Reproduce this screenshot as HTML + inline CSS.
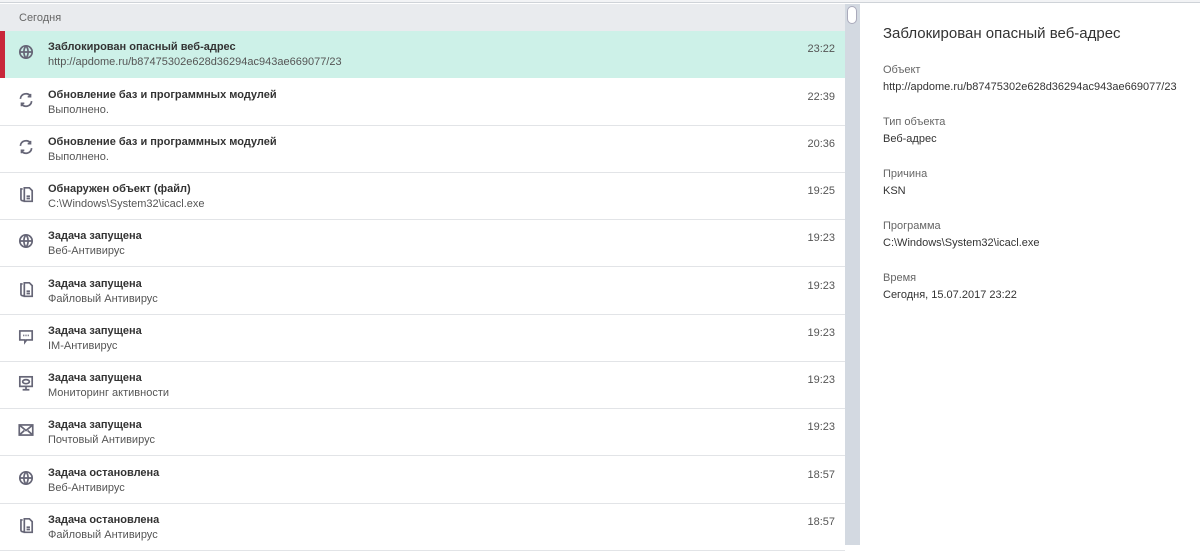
<!DOCTYPE html>
<html><head><meta charset="utf-8"><style>
*{margin:0;padding:0;box-sizing:border-box}
body{width:1200px;height:545px;overflow:hidden;background:#fff;font-family:"Liberation Sans",sans-serif;position:relative}
.top{position:absolute;left:0;top:0;width:1200px;height:3px;background:#f2f3f5;border-bottom:1px solid #cfd3d8}
.hdr{position:absolute;left:0;top:4px;width:845px;height:27px;background:#e9ebee;font-size:11px;color:#666;padding:8px 0 0 19px}
.row{position:absolute;left:0;width:845px;height:47px;border-bottom:1.5px solid #e2e4e7}
.row.sel{background:#cdf1e8;border-bottom:none}
.row.sel:before{content:"";position:absolute;left:0;top:0;width:5px;height:47px;background:#c8283a}
.t{position:absolute;left:48px;top:10px;font-size:11px;font-weight:bold;color:#333}
.s{position:absolute;left:48px;top:25px;font-size:11px;color:#555}
.tm{position:absolute;right:10px;top:12px;font-size:11px;color:#555}
.ic{position:absolute;left:17px;top:12px;width:18px;height:18px}
.sb{position:absolute;left:845px;top:4px;width:15px;height:541px;background:#d3d9e1}
.th{position:absolute;left:847px;top:6px;width:10px;height:18px;background:#fff;border:1px solid #aab;border-radius:5px}
.rt{position:absolute;left:883px;top:25px;font-size:15px;color:#333}
.l{position:absolute;left:883px;font-size:11px;color:#666}
.v{position:absolute;left:883px;font-size:11px;color:#333}
</style></head><body>
<div class="top"></div>
<div class="hdr">Сегодня</div>

<div class="row sel" style="top:31px"><svg class="ic" viewBox="0 0 16 16" fill="none" stroke="#667" stroke-width="1.5"><circle cx="8" cy="8" r="5.5"/><path d="M2.5 8h11M8 2.5c-2.5 3-2.5 8 0 11M8 2.5c2.5 3 2.5 8 0 11"/></svg><div class="t">Заблокирован опасный веб-адрес</div><div class="s">http://apdome.ru/b87475302e628d36294ac943ae669077/23</div><div class="tm">23:22</div></div>

<div class="row" style="top:79px"><svg class="ic" viewBox="0 0 16 16" fill="none" stroke="#667" stroke-width="1.5"><path d="M3 7a5 5 0 0 1 9-2.5M12 2.5v2.5h-2.5M13 9a5 5 0 0 1-9 2.5M4 13.5v-2.5h2.5"/></svg><div class="t">Обновление баз и программных модулей</div><div class="s">Выполнено.</div><div class="tm">22:39</div></div>

<div class="row" style="top:126px"><svg class="ic" viewBox="0 0 16 16" fill="none" stroke="#667" stroke-width="1.5"><path d="M3 7a5 5 0 0 1 9-2.5M12 2.5v2.5h-2.5M13 9a5 5 0 0 1-9 2.5M4 13.5v-2.5h2.5"/></svg><div class="t">Обновление баз и программных модулей</div><div class="s">Выполнено.</div><div class="tm">20:36</div></div>

<div class="row" style="top:173px"><svg class="ic" viewBox="0 0 16 16" fill="none" stroke="#667" stroke-width="1.5"><path d="M5 3.5H3.5v9a1.5 1.5 0 0 0 1.5 1.5h1"/><path d="M6.5 2.5h4.5l2.5 2.5v9.5h-7z"/><path d="M8.5 10h3M8.5 12h3"/></svg><div class="t">Обнаружен объект (файл)</div><div class="s">C:\Windows\System32\icacl.exe</div><div class="tm">19:25</div></div>

<div class="row" style="top:220px"><svg class="ic" viewBox="0 0 16 16" fill="none" stroke="#667" stroke-width="1.5"><circle cx="8" cy="8" r="5.5"/><path d="M2.5 8h11M8 2.5c-2.5 3-2.5 8 0 11M8 2.5c2.5 3 2.5 8 0 11"/></svg><div class="t">Задача запущена</div><div class="s">Веб-Антивирус</div><div class="tm">19:23</div></div>

<div class="row" style="top:268px"><svg class="ic" viewBox="0 0 16 16" fill="none" stroke="#667" stroke-width="1.5"><path d="M5 3.5H3.5v9a1.5 1.5 0 0 0 1.5 1.5h1"/><path d="M6.5 2.5h4.5l2.5 2.5v9.5h-7z"/><path d="M8.5 10h3M8.5 12h3"/></svg><div class="t">Задача запущена</div><div class="s">Файловый Антивирус</div><div class="tm">19:23</div></div>

<div class="row" style="top:315px"><svg class="ic" viewBox="0 0 16 16" fill="none" stroke="#667" stroke-width="1.5"><path d="M2.5 3.5h11v8h-5l-1.5 2v-2h-4.5z"/><path d="M5.5 7.5h1M7.5 7.5h1M9.5 7.5h1"/></svg><div class="t">Задача запущена</div><div class="s">IM-Антивирус</div><div class="tm">19:23</div></div>

<div class="row" style="top:362px"><svg class="ic" viewBox="0 0 16 16" fill="none" stroke="#667" stroke-width="1.5"><rect x="2.5" y="2.5" width="11" height="8.5"/><path d="M8 11v3M5 14h6"/><ellipse cx="8" cy="6.8" rx="3" ry="1.8"/></svg><div class="t">Задача запущена</div><div class="s">Мониторинг активности</div><div class="tm">19:23</div></div>

<div class="row" style="top:409px"><svg class="ic" viewBox="0 0 16 16" fill="none" stroke="#667" stroke-width="1.5"><rect x="2" y="3.5" width="12" height="9"/><path d="M2 3.5l6 5 6-5M2 12.5l4.5-4M14 12.5l-4.5-4"/></svg><div class="t">Задача запущена</div><div class="s">Почтовый Антивирус</div><div class="tm">19:23</div></div>

<div class="row" style="top:457px"><svg class="ic" viewBox="0 0 16 16" fill="none" stroke="#667" stroke-width="1.5"><circle cx="8" cy="8" r="5.5"/><path d="M2.5 8h11M8 2.5c-2.5 3-2.5 8 0 11M8 2.5c2.5 3 2.5 8 0 11"/></svg><div class="t">Задача остановлена</div><div class="s">Веб-Антивирус</div><div class="tm">18:57</div></div>

<div class="row" style="top:504px"><svg class="ic" viewBox="0 0 16 16" fill="none" stroke="#667" stroke-width="1.5"><path d="M5 3.5H3.5v9a1.5 1.5 0 0 0 1.5 1.5h1"/><path d="M6.5 2.5h4.5l2.5 2.5v9.5h-7z"/><path d="M8.5 10h3M8.5 12h3"/></svg><div class="t">Задача остановлена</div><div class="s">Файловый Антивирус</div><div class="tm">18:57</div></div>

<div class="sb"></div><div class="th"></div>

<div class="rt">Заблокирован опасный веб-адрес</div>
<div class="l" style="top:64px">Объект</div>
<div class="v" style="top:81px">http://apdome.ru/b87475302e628d36294ac943ae669077/23</div>
<div class="l" style="top:116px">Тип объекта</div>
<div class="v" style="top:133px">Веб-адрес</div>
<div class="l" style="top:168px">Причина</div>
<div class="v" style="top:185px">KSN</div>
<div class="l" style="top:220px">Программа</div>
<div class="v" style="top:237px">C:\Windows\System32\icacl.exe</div>
<div class="l" style="top:272px">Время</div>
<div class="v" style="top:289px">Сегодня, 15.07.2017 23:22</div>
</body></html>
